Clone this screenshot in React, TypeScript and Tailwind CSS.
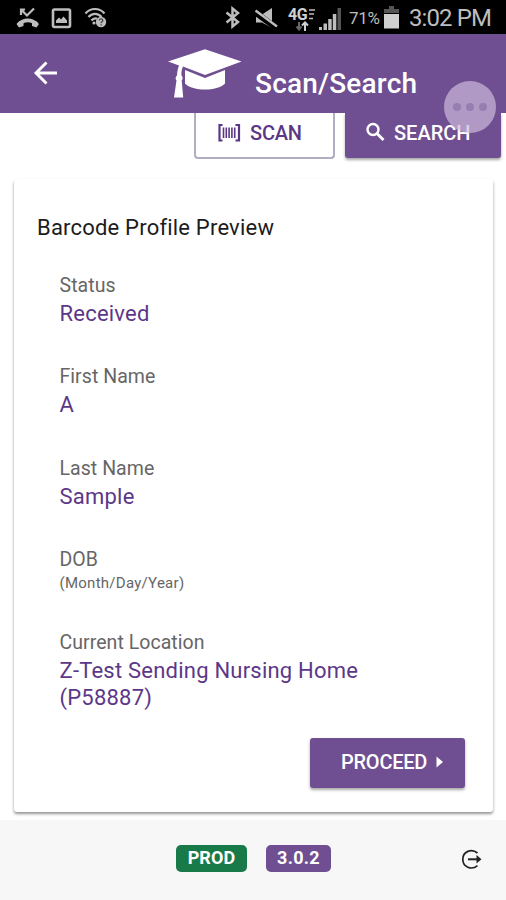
import React from 'react';

interface Field {
  label: string;
  hint?: string;
  value?: string[];
  boxClass: string;
}

const FIELDS: Field[] = [
  { label: 'Status', value: ['Received'], boxClass: 'h-[91.5px]' },
  { label: 'First Name', value: ['A'], boxClass: 'h-[91.5px]' },
  { label: 'Last Name', value: ['Sample'], boxClass: 'h-[91.5px]' },
  { label: 'DOB', hint: '(Month/Day/Year)', boxClass: 'h-[83px]' },
  { label: 'Current Location', value: ['Z-Test Sending Nursing Home', '(P58887)'], boxClass: 'h-[84px]' },
];

const StatusBar: React.FC = () => (
  <div className="flex h-[34px] shrink-0 items-center bg-black pl-4 text-[#bdbdbd]">
    {/* missed call */}
    <svg className="h-[22px] w-6 shrink-0" viewBox="0 0 24 22" fill="none" stroke="currentColor">
      <path d="M5 9V3.500h4M5.500 4l5.500 5.500L18 2.500" strokeWidth="2.200" />
      <path d="M2.500 18.500c5-5.500 13.500-5.500 18.500 0" strokeWidth="3.600" />
      <path d="M0.500 18l3-3 4 1.500v3.500L3 21.500zM23 18l-3-3-4 1.500v3.500l4.500 1.500z" fill="currentColor" stroke="none" />
    </svg>
    {/* gallery */}
    <svg className="ml-[11px] mt-[2px] h-[21px] w-[21px] shrink-0" viewBox="0 0 21 21">
      <rect x="2" y="1.500" width="17" height="17.500" rx="1.500" fill="none" stroke="currentColor" strokeWidth="2.600" />
      <path d="M5 15v-2.500l3-3 2 2 2.500-3 3.500 4V15z" fill="currentColor" />
    </svg>
    {/* wifi with question badge */}
    <svg className="ml-[12px] h-[22px] w-[24px] shrink-0" viewBox="0 0 24 22" fill="none" stroke="currentColor" strokeWidth="2.200">
      <path d="M1.500 7.500c5-6 14-6 19 0M4.500 11c3.500-4.300 9.500-4.300 13 0M7.500 14.500c1.500-2 3.500-2.500 5.500-2" />
      <circle cx="10" cy="17" r="1.600" fill="currentColor" stroke="none" />
      <circle cx="17" cy="16" r="5.200" fill="currentColor" stroke="none" />
      <path d="M15.300 14.500c0-2.200 3.500-2.200 3.500 0 0 1.300-1.700 1.300-1.700 2.700M17.100 18.300v1.300" stroke="#444" strokeWidth="1.300" />
    </svg>
    {/* bluetooth */}
    <svg className="ml-[117px] h-[23px] w-[17px] shrink-0" viewBox="0 0 17 23" fill="none" stroke="currentColor" strokeWidth="2.500">
      <path d="M1.500 6.500l11.500 9.500-5.500 4.500v-18l5.500 4.500L1.500 16.500" />
    </svg>
    {/* muted speaker */}
    <svg className="ml-[12px] mt-[3px] h-[22px] w-[24px] shrink-0" viewBox="0 0 24 22">
      <path d="M2 6.500h6L18 0v20L8 14.500H2z" fill="currentColor" />
      <path d="M0 3.500l23 17" stroke="#000" strokeWidth="6" />
      <path d="M1.500 2.500l21.500 16" stroke="currentColor" strokeWidth="2.400" />
    </svg>
    {/* 4G LTE */}
    <div className="ml-[10px] h-[25px] w-[28px] shrink-0 pt-[3px]">
      <div className="flex h-[13px] items-start font-bold">
        <span className="w-[21px] text-[16px] leading-[13px] tracking-[-0.5px] text-[#d0d0d0]">4G</span>
        <svg className="mt-px h-[11px] w-[6px]" viewBox="0 0 6 11" fill="none" stroke="currentColor" strokeWidth="1.500">
          <path d="M0 1h6M0 5h5M0 9.500h4" />
        </svg>
      </div>
      <svg className="ml-[8px] h-[10px] w-[13px]" viewBox="0 0 13 10" fill="none" strokeWidth="2">
        <path d="M3 1v7M0.500 5.500l2.500 3 2.500-3" stroke="#666" />
        <path d="M9 10V1M6 4.500l3-3 3 3" stroke="#d0d0d0" />
      </svg>
    </div>
    {/* signal bars */}
    <svg className="ml-[2px] mt-[3px] h-[23px] w-[24px] shrink-0" viewBox="0 0 24 23" fill="currentColor">
      <path d="M1 20h3v3H1zM5.500 16.500h3.500V23H5.500zM10.200 12h3.500v11h-3.500zM14.800 7h3.500v16h-3.500z" />
      <path d="M19.500 1H23v22h-3.500z" fill="#555" />
    </svg>
    <span className="ml-[7px] w-[35px] shrink-0 whitespace-nowrap pt-[3px] text-[17px] leading-none tracking-[-0.3px]">71%</span>
    {/* battery */}
    <svg className="h-[24px] w-[15px] shrink-0" viewBox="0 0 15 24">
      <path d="M5 1h5v3h5v4H0V4h5z" fill="#555" />
      <path d="M0 9h15v14.500H0z" fill="#d0d0d0" />
    </svg>
    <span className="ml-[10px] whitespace-nowrap pt-[2px] text-[24px] leading-none tracking-[-0.9px]">3:02 PM</span>
  </div>
);

const Header: React.FC = () => (
  <header className="relative flex h-[79px] shrink-0 items-start bg-[#6f4f91] text-white">
    <svg className="ml-[33px] mt-[27px] h-6 w-6 shrink-0" viewBox="0 0 24 24" fill="none" stroke="currentColor" strokeWidth="2.900">
      <path d="M13.500 1.500L3 12l10.500 10.500M3 12h21" />
    </svg>
    <svg className="ml-[110px] mt-[13px] h-[52px] w-[76px] shrink-0" viewBox="0 0 76 52" fill="currentColor">
      <path d="M38 2.300L74.500 14.500 38 28 16 19.600c-1.500 3-1.700 6-1.500 9 1.500 1.500 1.500 3.500.2 5l1.500 17H7l2.500-17c-1.500-1.800-1-4 .5-5.200.2-3.500.7-6.500 2-10L1 14.500z" />
      <path d="M18 23l20 8 20-8v13.500c-8 8-32 8-40 0z" />
    </svg>
    <h1 className="ml-[12px] mt-[33px] whitespace-nowrap text-[28px] font-medium leading-[34px] tracking-[0.2px]">Scan/Search</h1>
    {/* floating assistive button, hangs over the header edge */}
    <div className="absolute left-[444px] top-[47px] z-10 flex h-[52px] w-[52px] items-center justify-center gap-[5px] rounded-full bg-[#cdb9dc]/70">
      <span className="h-2 w-2 rounded-full bg-[#977eb0]" />
      <span className="h-2 w-2 rounded-full bg-[#977eb0]" />
      <span className="h-2 w-2 rounded-full bg-[#977eb0]" />
    </div>
  </header>
);

const ActionBar: React.FC = () => (
  <div className="flex h-[66px] shrink-0 items-start pl-[194px] text-[20px] font-medium leading-[24px]">
    <button className="flex h-[46px] w-[141px] items-start rounded-b-[4px] border-x-2 border-b-2 border-[#b3adc1] pl-[22px] pt-[8px] text-[#5b3785]">
      <svg className="mt-[2px] h-[20px] w-[24px]" viewBox="0 0 24 20" fill="none" stroke="currentColor">
        <path d="M4.500 2H1.500v15.500h3M17.500 2h3.500v15.500h-3.500" strokeWidth="2.200" />
        <path d="M5.500 4.500v10.500M8.300 4.500v10.500M11.100 4.500v10.500M13.900 4.500v10.500M16.700 4.500v10.500" strokeWidth="1.600" />
      </svg>
      <span className="ml-[8px] tracking-[-0.2px]">SCAN</span>
    </button>
    <button className="ml-[10px] flex h-[45px] w-[156px] items-start rounded-b-[3px] bg-[#6f4f91] pl-[20px] pt-[8px] text-white shadow-[0_2px_3px_rgba(0,0,0,0.35)]">
      <svg className="mt-[1px] h-[20px] w-[21px]" viewBox="0 0 21 20" fill="none" stroke="currentColor" strokeWidth="2.400">
        <circle cx="8" cy="7.500" r="5.500" />
        <path d="M12 11.500l6.500 6.500" strokeWidth="2.800" />
      </svg>
      <span className="ml-[8px]">SEARCH</span>
    </button>
  </div>
);

const ProfileField: React.FC<{ field: Field }> = ({ field }) => (
  <div className={field.boxClass}>
    <div className="text-[19.5px] leading-[28px] tracking-[0.05px] text-[#666]">{field.label}</div>
    {field.hint && <div className="text-[15px] leading-[19px] tracking-[0.27px] text-[#666]">{field.hint}</div>}
    {field.value?.map((line) => (
      <div key={line} className="whitespace-nowrap text-[22px] leading-[27px] tracking-[0.22px] text-[#5c3788]">
        {line}
      </div>
    ))}
  </div>
);

const ProfileCard: React.FC = () => (
  <section className="ml-[14px] flex h-[633px] w-[479px] shrink-0 flex-col rounded-[3px] bg-white shadow-[0_2px_3px_rgba(0,0,0,0.42)]">
    <h2 className="mt-[35px] pl-[23px] text-[22px] leading-[28px] tracking-[0.2px] text-[#1c1c1c]">Barcode Profile Preview</h2>
    <div className="mt-[29.5px] pl-[45.5px]">
      {FIELDS.map((field) => (
        <ProfileField key={field.label} field={field} />
      ))}
    </div>
    <button className="mb-[24px] ml-auto mr-[28px] mt-auto flex h-[50px] w-[155px] shrink-0 items-center rounded-[3px] bg-[#6f4f91] pb-[2px] pl-[31px] text-[20px] font-medium text-white shadow-[0_2px_3px_rgba(0,0,0,0.35)]">
      <span className="tracking-[-0.25px]">PROCEED</span>
      <svg className="ml-[9px] h-[12px] w-[8px]" viewBox="0 0 8 12" fill="currentColor">
        <path d="M0.500 0.500L7 6 0.500 11.500z" />
      </svg>
    </button>
  </section>
);

const Footer: React.FC = () => (
  <footer className="mt-[8px] flex h-[80px] shrink-0 items-start bg-[#f7f7f7] pl-[176px] pt-[25px] text-[18px] font-bold leading-[25px] text-white">
    <span className="h-[27px] w-[71px] rounded-[5px] bg-[#187a49] text-center tracking-[0.1px]">PROD</span>
    <span className="ml-[19px] h-[27px] w-[65px] rounded-[5px] bg-[#6f4f91] text-center tracking-[0.3px]">3.0.2</span>
    <svg className="ml-[130px] mt-[4px] h-[21px] w-[21px]" viewBox="0 0 21 21" fill="none" stroke="#222" strokeWidth="1.700">
      <path d="M16.500 4C10.500-1 1.800 2.500 1.800 10.300s8.700 11.300 14.700 6.300" />
      <path d="M7 10.300h11" strokeWidth="2" />
      <path d="M15.500 6l5 4.300-5 4.300z" fill="#222" stroke="none" />
    </svg>
  </footer>
);

const App: React.FC = () => {
  return (
    <div className="flex h-[900px] w-[506px] flex-col overflow-hidden bg-white font-[Roboto,sans-serif]">
      <StatusBar />
      <Header />
      <ActionBar />
      <ProfileCard />
      <Footer />
    </div>
  );
};

export default App;
